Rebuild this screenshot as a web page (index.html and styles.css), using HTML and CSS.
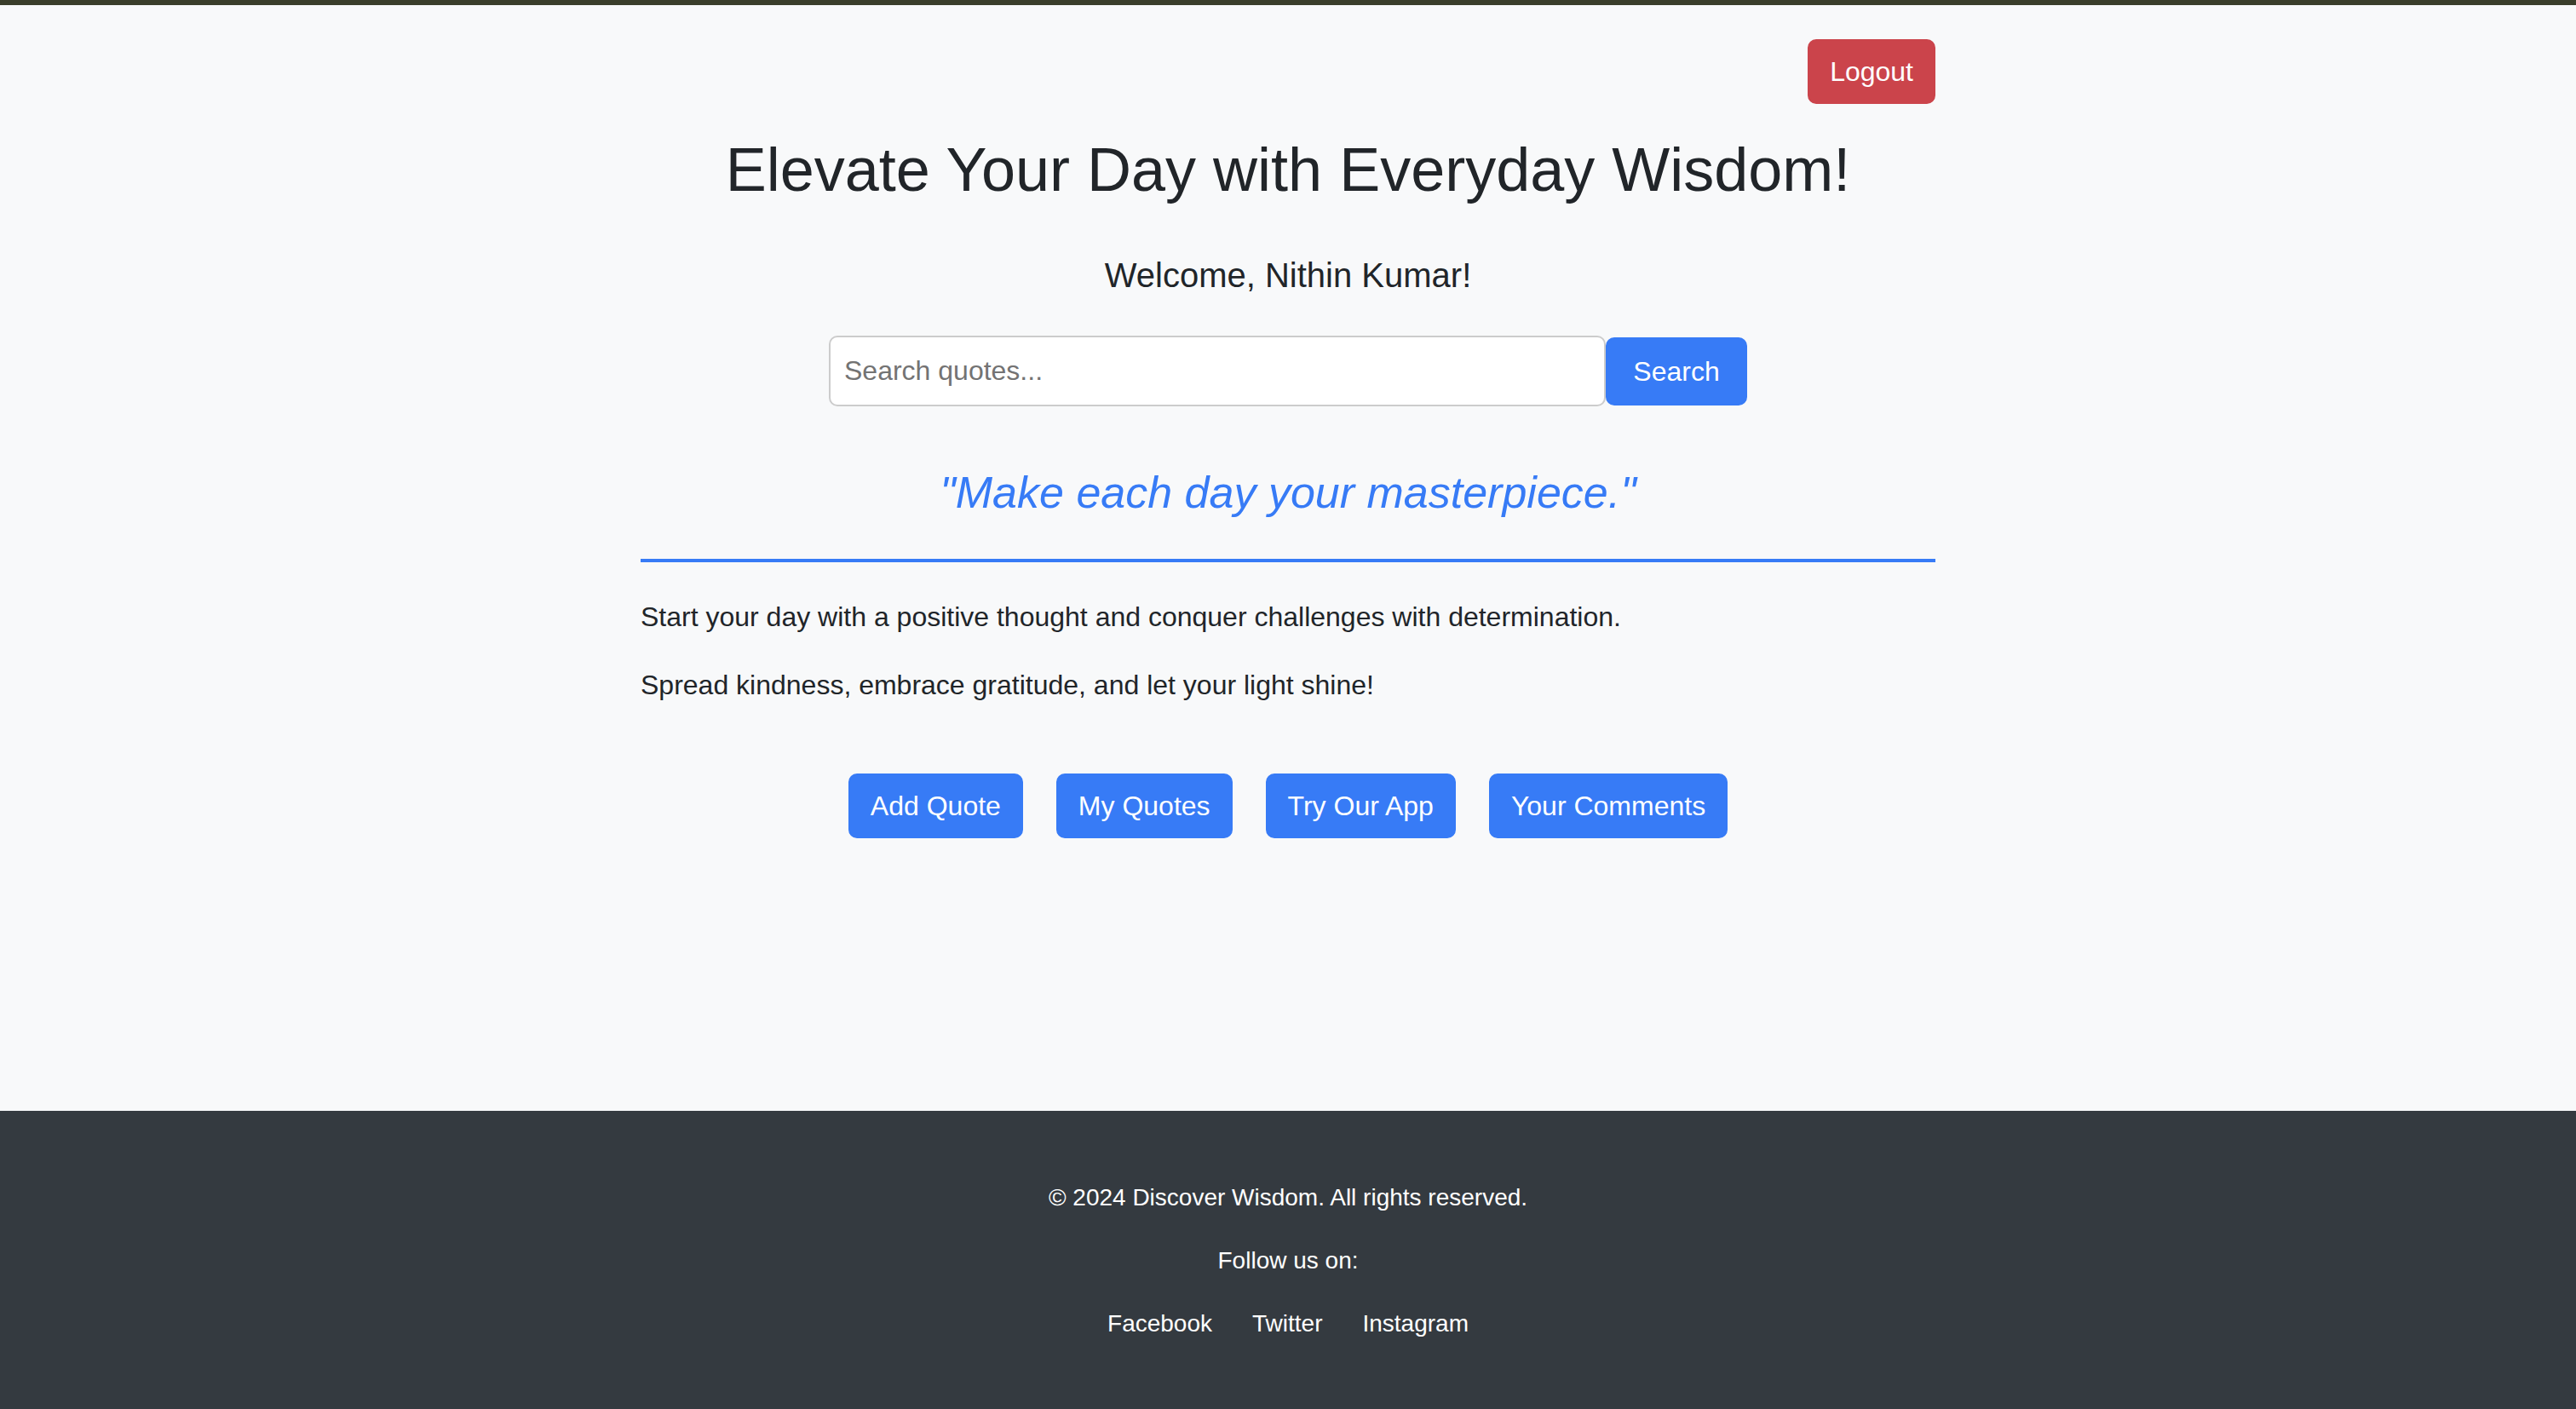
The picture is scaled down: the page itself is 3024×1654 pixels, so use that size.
FILE: index.html
```html
<!DOCTYPE html>
<html lang="en">
<head>
<meta charset="utf-8">
<title>Discover Wisdom</title>
<link rel="stylesheet" href="styles.css">
</head>
<body>
<div class="page">
  <div class="topbar"></div>
  <main class="main">
    <div class="container">
      <div class="top-row">
        <button class="btn btn-danger">Logout</button>
      </div>
      <h1 class="title">Elevate Your Day with Everyday Wisdom!</h1>
      <p class="lead">Welcome, Nithin Kumar!</p>
      <form class="search">
        <input class="search-input" type="text" placeholder="Search quotes...">
        <button class="btn btn-primary search-btn" type="button">Search</button>
      </form>
      <p class="quote">"Make each day your masterpiece."</p>
      <hr class="rule">
      <p class="text">Start your day with a positive thought and conquer challenges with determination.</p>
      <p class="text">Spread kindness, embrace gratitude, and let your light shine!</p>
      <div class="actions">
        <button class="btn btn-primary">Add Quote</button>
        <button class="btn btn-primary">My Quotes</button>
        <button class="btn btn-primary">Try Our App</button>
        <button class="btn btn-primary">Your Comments</button>
      </div>
    </div>
  </main>
  <footer class="footer">
    <p class="foot-line">© 2024 Discover Wisdom. All rights reserved.</p>
    <p class="foot-line">Follow us on:</p>
    <p class="foot-line foot-links">
      <a href="#">Facebook</a>
      <a href="#">Twitter</a>
      <a href="#">Instagram</a>
    </p>
  </footer>
</div>
</body>
</html>
```

FILE: styles.css
```css
* { box-sizing: border-box; }
html, body { margin: 0; padding: 0; }
body {
  font-family: "Liberation Sans", Arial, Helvetica, sans-serif;
  font-size: 32px;
  line-height: 1.5;
  color: #212529;
  background: #f8f9fa;
  overflow: hidden;
}
.page {
  display: flex;
  flex-direction: column;
  height: 1654px;
}
.topbar {
  height: 6px;
  background: #3a3e2b;
  flex: none;
}
.main { flex: 1; }
.container {
  width: 1520px;
  margin: 0 auto;
  padding-top: 40px;
}
.top-row {
  display: flex;
  justify-content: flex-end;
}
.btn {
  font-family: inherit;
  font-size: 32px;
  line-height: 48px;
  padding: 12px 24px;
  border: 2px solid transparent;
  border-radius: 10px;
  color: #fff;
  cursor: pointer;
}
.btn-danger { background: #cb444b; border-color: #cb444b; height: 76px; }
.btn-primary { background: #377bf6; border-color: #377bf6; }
.title {
  margin: 34px 0 51px;
  font-size: 72px;
  font-weight: 400;
  line-height: 1.2;
  text-align: center;
  color: #212529;
}
.lead {
  margin: 0 0 41px;
  font-size: 40px;
  line-height: 60px;
  text-align: center;
}
.search {
  display: flex;
  justify-content: center;
  align-items: center;
  gap: 0;
  margin: 0;
}
.search-input {
  width: 912px;
  height: 83px;
  padding: 0 16px;
  font-family: inherit;
  font-size: 32px;
  color: #212529;
  background: #fff;
  border: 2px solid #cccccc;
  border-radius: 10px;
  outline: none;
}
.search-input::placeholder { color: #737373; }
.search-btn {
  width: 166px;
  height: 80px;
  padding: 0;
}
.quote {
  margin: 62px 0 39px;
  font-size: 52px;
  line-height: 78px;
  font-style: italic;
  text-align: center;
  color: #377bf6;
}
.rule {
  margin: 0 0 40px;
  height: 4px;
  border: 0;
  background: #377bf6;
}
.text {
  margin: 0 0 32px;
  font-size: 32px;
  line-height: 48px;
}
.actions {
  display: flex;
  justify-content: center;
  gap: 39px;
  margin-top: 80px;
}
.actions .btn { height: 76px; }
.footer {
  flex: none;
  height: 350px;
  background: #343a40;
  color: #fff;
  text-align: center;
  padding-top: 81px;
}
.foot-line {
  margin: 0 0 32px;
  font-size: 28px;
  line-height: 42px;
}
.foot-links {
  display: flex;
  justify-content: center;
  gap: 47px;
}
.foot-links a { color: #fff; text-decoration: none; }
```
